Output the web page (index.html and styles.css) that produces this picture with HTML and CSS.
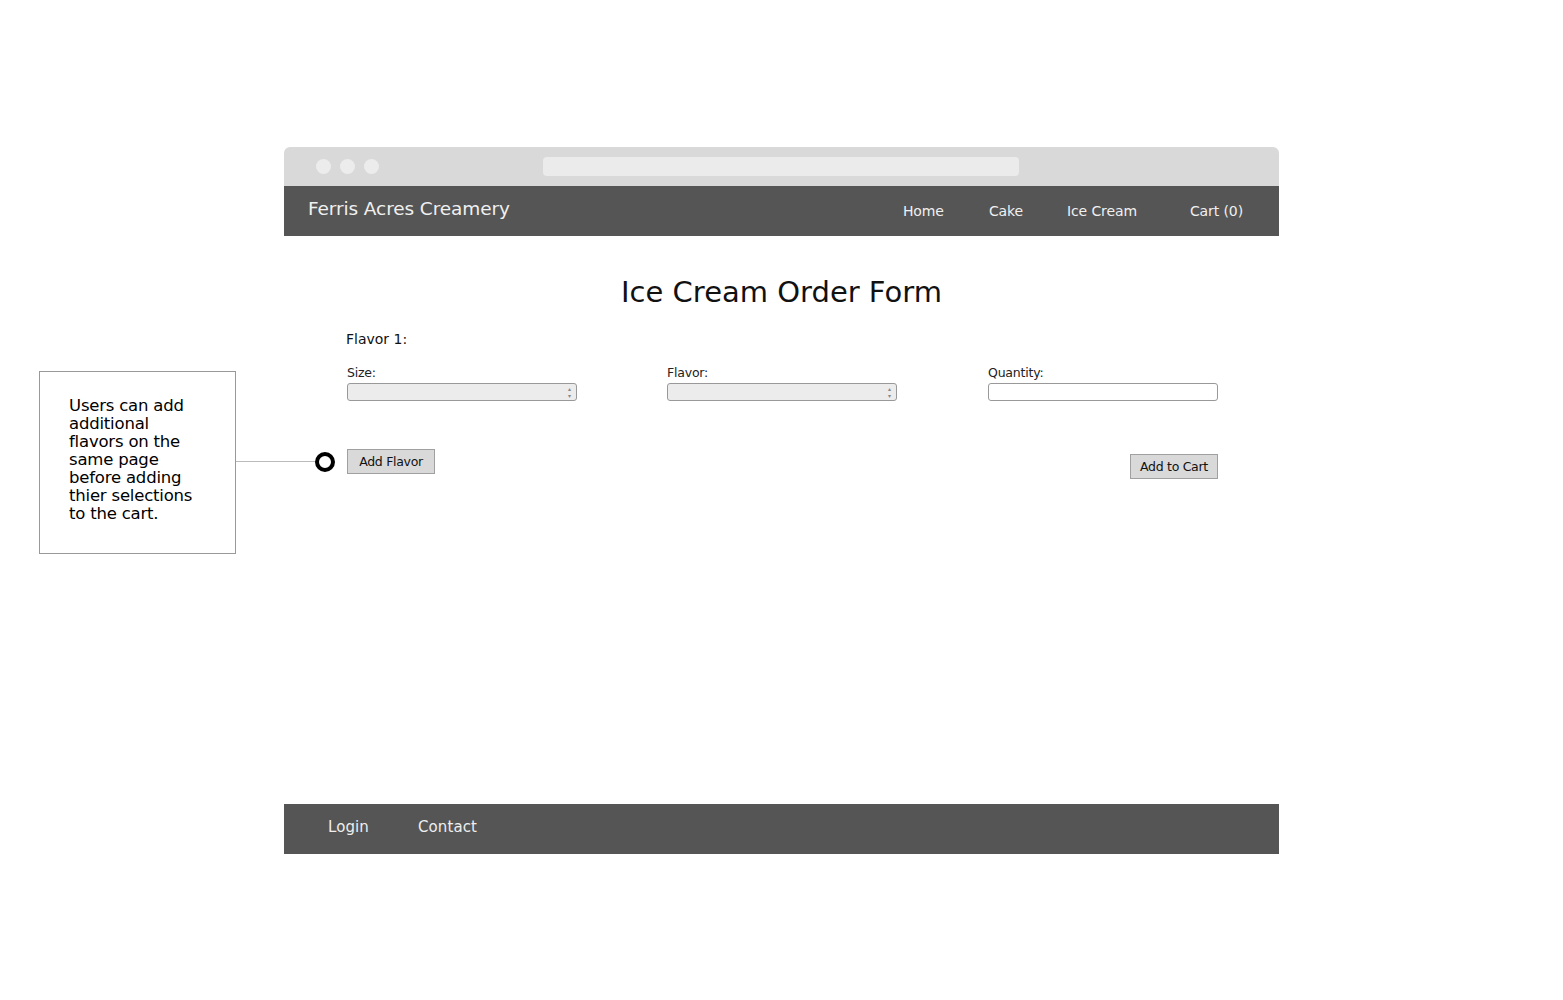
FILE: index.html
```html
<!DOCTYPE html>
<html>
<head>
<meta charset="utf-8">
<link rel="stylesheet" href="styles.css">
</head>
<body>
<div class="page">
  <div class="browser">
    <div class="chrome">
      <div class="dots"><span class="dot"></span><span class="dot"></span><span class="dot"></span></div>
      <div class="address"></div>
    </div>
    <header class="nav">
      <div class="brand">Ferris Acres Creamery</div>
      <nav class="links">
        <span class="l-home">Home</span>
        <span class="l-cake">Cake</span>
        <span class="l-ice">Ice Cream</span>
        <span class="l-cart">Cart (0)</span>
      </nav>
    </header>
    <main class="content">
      <h1 class="title">Ice Cream Order Form</h1>
      <div class="flavor-head">Flavor 1:</div>
      <div class="fields">
        <div class="field">
          <div class="label">Size:</div>
          <div class="select"><span class="arrows">▴<br>▾</span></div>
        </div>
        <div class="field">
          <div class="label">Flavor:</div>
          <div class="select"><span class="arrows">▴<br>▾</span></div>
        </div>
        <div class="field">
          <div class="label">Quantity:</div>
          <div class="input"></div>
        </div>
      </div>
      <div class="actions">
        <div class="btn add-flavor">Add Flavor</div>
        <div class="btn add-cart">Add to Cart</div>
      </div>
    </main>
    <footer class="footer">
      <span class="f-login">Login</span>
      <span class="f-contact">Contact</span>
    </footer>
  </div>
  <div class="note">Users can add<br>additional<br>flavors on the<br>same page<br>before adding<br>thier selections<br>to the cart.</div>
  <div class="connector"></div>
  <div class="pin"></div>
</div>
</body>
</html>
```
FILE: styles.css
```css
html, body {
  margin: 0;
  padding: 0;
  background: #fff;
}
body {
  font-family: "DejaVu Sans", sans-serif;
  color: #111;
}
.page {
  position: relative;
  width: 1563px;
  height: 1000px;
  padding-top: 147px;
  box-sizing: border-box;
}
.browser {
  margin-left: 284px;
  width: 995px;
}
.chrome {
  height: 39px;
  background: #d9d9d9;
  border-radius: 6px 6px 0 0;
  display: flex;
  align-items: center;
}
.dots {
  display: flex;
  gap: 9px;
  margin-left: 32px;
}
.dot {
  width: 15px;
  height: 15px;
  border-radius: 50%;
  background: #ececec;
}
.address {
  margin-left: 164px;
  width: 476px;
  height: 19px;
  border-radius: 4px;
  background: #ebebeb;
}
.nav {
  height: 50px;
  background: #555;
  display: flex;
  align-items: flex-start;
  color: #f0f0f0;
}
.brand {
  margin-left: 24px;
  margin-top: 12px;
  font-size: 18.5px;
  letter-spacing: -0.1px;
}
.links {
  margin-left: auto;
  display: flex;
  margin-top: 17px;
  font-size: 14px;
  letter-spacing: -0.1px;
  white-space: nowrap;
}
.l-home { width: 86px; }
.l-cake { width: 78px; }
.l-ice { width: 123px; }
.l-cart { margin-right: 36px; }
.content {
  height: 568px;
  position: relative;
}
.title {
  margin: 0;
  padding-top: 38px;
  text-align: center;
  font-weight: normal;
  font-size: 29px;
  line-height: 36px;
  color: #111;
}
.flavor-head {
  margin-left: 62px;
  margin-top: 20px;
  font-size: 14px;
  line-height: 18px;
}
.fields {
  display: flex;
  margin-left: 63px;
  margin-top: 17px;
}
.field {
  flex: 0 0 230px;
  width: 230px;
  margin-right: 90px;
}
.field:nth-child(2) { margin-right: 91px; }
.label {
  font-size: 12.5px;
  line-height: 15px;
  letter-spacing: -0.2px;
  color: #222;
  margin-bottom: 3px;
}
.select, .input {
  height: 18px;
  box-sizing: border-box;
  border: 1px solid #999;
  border-radius: 3px;
  position: relative;
}
.select { background: #ececec; }
.input { background: #fff; }
.arrows {
  position: absolute;
  right: 5px;
  top: 1px;
  font-size: 6px;
  line-height: 7px;
  color: #888;
}
.actions {
  display: flex;
  align-items: flex-start;
  margin-left: 63px;
  margin-top: 48px;
  width: 871px;
  justify-content: space-between;
}
.btn {
  height: 25px;
  box-sizing: border-box;
  border: 1px solid #a0a0a0;
  background: #d9d9d9;
  font-size: 12.5px;
  line-height: 23px;
  letter-spacing: -0.3px;
  color: #111;
  text-align: center;
  width: 88px;
}
.add-cart { margin-top: 5px; }
.footer {
  height: 50px;
  background: #555;
  color: #eee;
  font-size: 15px;
  display: flex;
  align-items: flex-start;
  letter-spacing: 0.1px;
}
.f-login { margin-left: 44px; margin-top: 14px; }
.f-contact { margin-left: 49px; margin-top: 14px; }
.note {
  position: absolute;
  left: 39px;
  top: 371px;
  width: 197px;
  height: 183px;
  box-sizing: border-box;
  border: 1px solid #999;
  padding: 25px 10px 0 29px;
  font-size: 16.5px;
  line-height: 18px;
  letter-spacing: -0.2px;
  white-space: nowrap;
  color: #000;
}
.connector {
  position: absolute;
  left: 236px;
  top: 461px;
  width: 82px;
  height: 1px;
  background: #bbb;
}
.pin {
  position: absolute;
  left: 315px;
  top: 452px;
  width: 12px;
  height: 12px;
  border: 4px solid #000;
  border-radius: 50%;
  background: #fff;
}
```
